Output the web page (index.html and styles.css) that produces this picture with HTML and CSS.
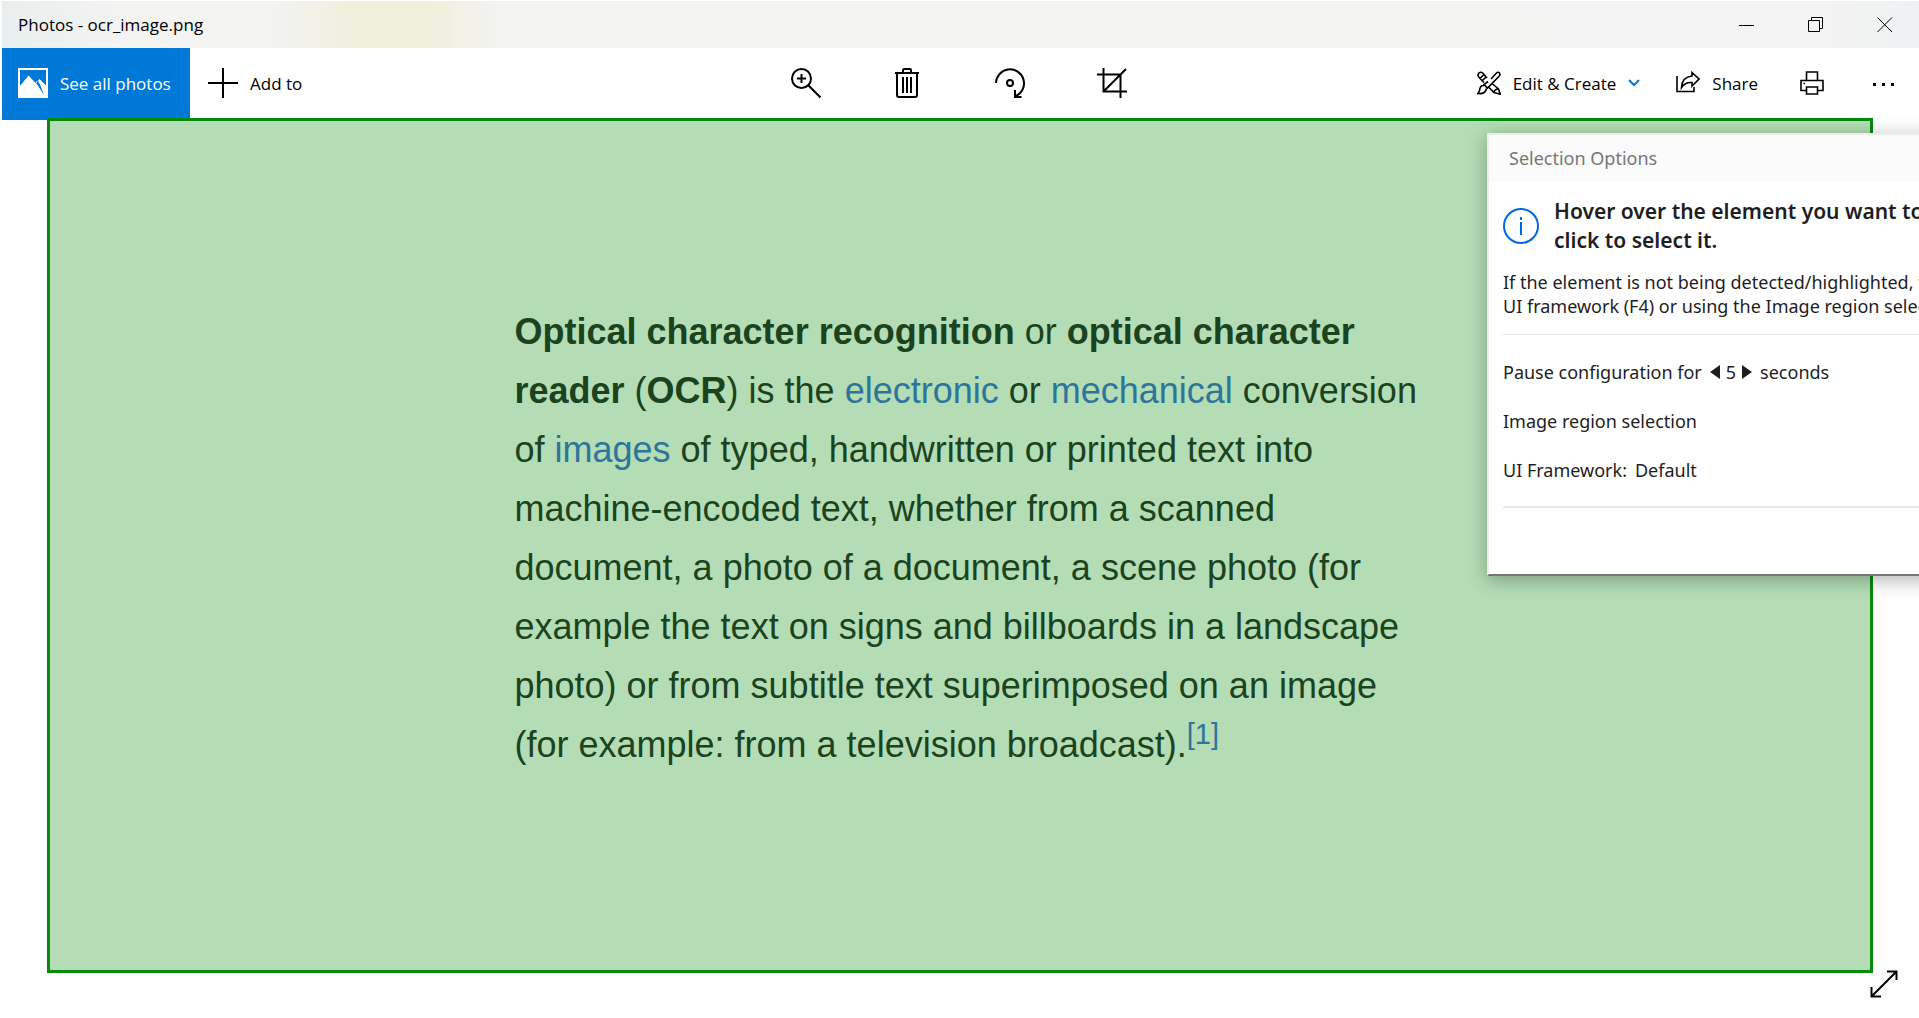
FILE: index.html
```html
<!DOCTYPE html>
<html lang="en">
<head>
<meta charset="utf-8">
<title>Photos - ocr_image.png</title>
<link rel="stylesheet" href="styles.css">
</head>
<body>
<div class="window">
  <header class="titlebar">
    <h1 class="title">Photos - ocr_image.png</h1>
    <div class="window-controls">
      <button class="window-button" aria-label="Minimize"><svg width="16" height="16" viewBox="0 0 16 16"><path d="M0 8.500H15" /></svg></button>
      <button class="window-button" aria-label="Restore"><svg width="16" height="16" viewBox="0 0 16 16"><path d="M.5 3.500H11.500V14.500H.5ZM3.500 3.500V.5H14.500V11.500H11.500" /></svg></button>
      <button class="window-button" aria-label="Close"><svg width="16" height="16" viewBox="0 0 16 16"><path d="M.5 .5L15 15M15 .5L.5 15" /></svg></button>
    </div>
  </header>

  <nav class="toolbar">
    <div class="group">
      <button class="tool see-all">
        <svg width="30" height="30" viewBox="0 0 30 30"><path class="solid" fill-rule="evenodd" d="M0 0H30V30H0ZM2 2V18L10.500 7.500L18 15.500L21.500 11L28 17.500V2ZM17.500 14L26 27L22 16.500L20 13Z"/></svg>
        <span>See all photos</span>
      </button>
      <button class="tool add">
        <svg width="30" height="30" viewBox="0 0 30 30"><path d="M15 0V30M0 15H30"/></svg>
        <span>Add to</span>
      </button>
    </div>
    <div class="group">
      <button class="tool square" aria-label="Zoom"><svg width="30" height="30" viewBox="0 0 30 30"><circle cx="10.500" cy="10.500" r="9.500"/><path d="M10.500 6V15M6 10.500H15M17.500 17.500L29.500 29.500"/></svg></button>
      <button class="tool square" aria-label="Delete"><svg width="30" height="30" viewBox="0 0 30 30"><path d="M2 5H26M10 5V2Q10 1 11 1H17Q18 1 18 2V5M4 5V27Q4 29 6 29H22Q24 29 24 27V5M10 9V25M14 9V25M18 9V25"/></svg></button>
      <button class="tool square" aria-label="Rotate"><svg width="30" height="30" viewBox="0 0 30 30"><path d="M1 15A14 14 0 1 1 21 28M20 22V29H26.500"/><circle cx="15" cy="15" r="3"/></svg></button>
      <button class="tool square" aria-label="Crop"><svg width="30" height="30" viewBox="0 0 30 30"><path d="M0 6.500H23.500V30M6.500 0V23.500H30M6.500 23.500L29 1"/></svg></button>
    </div>
    <div class="group end">
      <button class="tool edit">
        <svg class="fine" width="24" height="24" viewBox="0 0 24 24"><path d="M14 8L19.500 2Q21 .5 22.500 2Q23.700 3.400 22.300 5L10.500 17L7 13.500L11 10.500M7 14.500Q3.500 14 2.800 18Q2.500 21 .8 22.500Q8.500 23.500 9.500 17.500M3 7.500L1.500 5.500Q.3 3.500 2 2Q4 .5 5.700 2L10 7M3 7.500L7 11.500M3 7.500L7 3.500M5.500 9.500L9 6M15 12.500L21.500 18L23.200 23.200L17 21.500L12 16.500M17 21.500Q17.500 18 21.500 18"/></svg>
        <span>Edit &amp; Create</span>
        <svg class="chevron" width="12" height="12" viewBox="0 0 12 12"><path d="M1 3L6 8L11 3"/></svg>
      </button>
      <button class="tool share">
        <svg class="fine" width="24" height="24" viewBox="0 0 24 24"><path d="M1 5V20.500H18V16M16 1.500L23 8L16 15V11.500Q9 11 5.500 16.500Q6 6 16 5Z"/></svg>
        <span>Share</span>
      </button>
      <button class="tool print" aria-label="Print"><svg class="fine" width="24" height="24" viewBox="0 0 24 24"><path d="M6.500 9V1H17.500V9M6.500 19.500H1V9.500H23V19.500H17.500M6.500 16H17.500V23H6.500ZM3.500 12.500H5"/></svg></button>
      <button class="tool more" aria-label="More"><svg width="24" height="24" viewBox="0 0 24 24"><path class="solid" d="M1 12h3v3H1ZM10 12h3v3h-3ZM19 12h3v3h-3Z"/></svg></button>
    </div>
  </nav>

  <main class="stage">
    <p class="excerpt"><b>Optical character recognition</b> or <b>optical character reader</b> (<b>OCR</b>) is the <a href="#electronic">electronic</a> or <a href="#mechanical">mechanical</a> conversion of <a href="#images">images</a> of typed, handwritten or printed text into machine-encoded text, whether from a scanned document, a photo of a document, a scene photo (for example the text on signs and billboards in a landscape photo) or from subtitle text superimposed on an image (for example: from a television broadcast).<sup><a href="#note">[1]</a></sup></p>
  </main>

  <footer class="footer">
    <button class="fullscreen" aria-label="Full screen"><svg width="28" height="28" viewBox="0 0 28 28"><path d="M2 26L26 2M17 1.500H26.500V10M1.500 17V26.500H11"/></svg></button>
  </footer>

  <aside class="panel" aria-label="Selection Options">
    <h2 class="panel-title">Selection Options</h2>
    <div class="panel-body">
      <div class="hint">
        <svg width="36" height="36" viewBox="0 0 36 36"><circle cx="18" cy="18" r="17"/><path d="M18 14V27M18 9V12"/></svg>
        <h3>Hover over the element you want to<br>click to select it.</h3>
      </div>
      <p class="help">If the element is not being detected/highlighted, try<br>UI framework (F4) or using the Image region selection</p>
      <div class="options">
        <div class="option">Pause configuration for
          <span class="stepper"><button aria-label="Decrease"><svg width="10" height="14" viewBox="0 0 10 14"><path d="M0 7L10 0V14Z"/></svg></button>5<button aria-label="Increase"><svg width="10" height="14" viewBox="0 0 10 14"><path d="M10 7L0 0V14Z"/></svg></button></span>
          seconds</div>
        <div class="option">Image region selection</div>
        <div class="option">UI Framework: <span>Default</span></div>
      </div>
    </div>
  </aside>
</div>
</body>
</html>
```
FILE: styles.css
```css
* { box-sizing: border-box; }
body { margin: 0; background: #fff; color: #000; font-family: "Open Sans", "Noto Sans", sans-serif; font-size: 17px; }
h1, h2, h3, p { margin: 0; font-weight: 400; }
button { border: 0; padding: 0; background: none; color: inherit; font: inherit; display: flex; align-items: center; }
svg { display: block; flex: none; fill: none; stroke: #000; stroke-width: 2; }
.solid { fill: currentColor; stroke: none; }
.fine { stroke-width: 1.600; }

.window { position: relative; display: flex; flex-direction: column; min-height: 100vh; overflow: hidden; }

.titlebar {
  display: flex; justify-content: space-between; align-items: center;
  height: 48px; margin-left: 2px; border-top: 1px solid #fff;
  background: linear-gradient(90deg, #e8eeee 0, #f3f3f2 110px, #f3f3f2 270px, #efefda 360px, #efefda 420px, #f3f3f2 500px, #f3f3f3 95%, #eff1f2 100%);
}
.title { padding-left: 16px; font-size: 17px; }
.window-controls { display: flex; }
.window-controls svg { stroke-width: 1; }
.window-button { width: 69px; height: 47px; justify-content: center; }

.toolbar { display: grid; grid-template-columns: 1fr auto 1fr; height: 72px; }
.group { display: flex; }
.end { justify-content: flex-end; }
.tool { height: 100%; white-space: nowrap; gap: 12px; padding: 0 18px 2px; }
.square { width: 102px; justify-content: center; padding: 0 2px 2px 0; }
.see-all { width: 188px; margin-left: 2px; padding: 0 16px 2px; background: #0078d7; color: #fff; }
.edit .chevron { stroke: #0078d7; }
.print { padding-left: 24px; }
.more { padding: 0 23px 2px 30px; }

.stage {
  position: relative; flex: 1; margin: -2px 46px 0 47px; padding: 0 0 16px 25px;
  display: flex; align-items: center; justify-content: center;
  border: 3px solid #058a0c; background: #b4ddb5;
}
.excerpt { width: 916px; color: #1b431e; font-family: "Liberation Sans", Arial, sans-serif; font-size: 36px; line-height: 59px; }
.excerpt a { color: #2d759b; text-decoration: none; }
.excerpt sup { font-size: 29px; line-height: 1px; }

.footer { display: flex; justify-content: flex-end; height: 45px; padding-right: 21px; }
.fullscreen { height: 22px; }

.panel {
  position: absolute; top: 133px; right: -68px; width: 500px;
  border: 2px solid #ececec; border-bottom-color: #777; background: #fff; color: #1e1e1e;
  box-shadow: 0 4px 18px rgba(0, 0, 0, .3);
  font-family: "Noto Sans", "Open Sans", sans-serif; font-size: 18px; white-space: nowrap;
}
.panel-title { height: 47px; padding-left: 20px; background: #fbfbfb; color: #767676; font-size: 18px; line-height: 46px; }
.panel-body { padding: 15px 15px 66px 14px; }
.hint { display: flex; align-items: center; gap: 15px; }
.hint svg { stroke: #0068e0; }
.hint h3 { font-size: 21px; font-weight: 600; line-height: 29px; }
.help { margin-top: 15px; padding-bottom: 16px; border-bottom: 1px solid #e8e8e8; line-height: 24px; }
.options { display: grid; gap: 25px; padding: 25px 0 24px; border-bottom: 2px solid #e8e8e8; line-height: 24px; }
.option { display: flex; gap: 8px; }
.stepper { display: flex; gap: 6px; }
.stepper svg { fill: #1e1e1e; stroke: none; }
```
